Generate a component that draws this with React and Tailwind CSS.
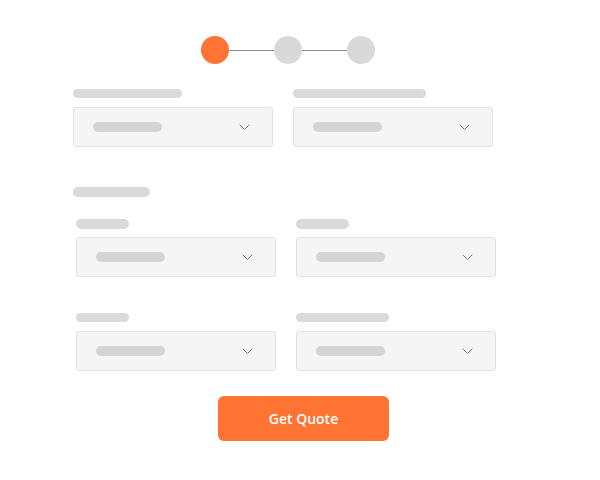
const Chevron = () => (
  <svg width="11" height="7" viewBox="0 0 11 7" fill="none" className="shrink-0">
    <path d="M1 1l4.5 4.5L10 1" stroke="#7a7a7a" strokeWidth="1" strokeLinecap="round" strokeLinejoin="round" />
  </svg>
);

const Select = () => (
  <div className="flex h-[40px] w-[200px] items-center justify-between rounded-[3px] border border-[#e2e2e2] bg-[#f5f5f5] pl-[19px] pr-[22px]">
    <div className="h-[10px] w-[69px] rounded-full bg-[#d4d4d4]" />
    <Chevron />
  </div>
);

const Field = ({ labelW, labelH = 'h-[10px]', gap = 'mt-[8px]' }) => (
  <div className="flex flex-col">
    <div className={`${labelH} rounded-full bg-[#dadada] ${labelW}`} />
    <div className={gap}>
      <Select />
    </div>
  </div>
);

export default function App() {
  return (
    <div className="h-[480px] w-[600px] bg-white" style={{ fontFamily: '"Open Sans", Lato, sans-serif' }}>
      <div className="flex items-center pl-[201px] pt-[36px]">
        <div className="size-[28px] rounded-full bg-[#ff7433]" />
        <div className="h-px w-[45px] bg-[#8a8a8a]" />
        <div className="size-[28px] rounded-full bg-[#d9d9d9]" />
        <div className="h-px w-[45px] bg-[#8a8a8a]" />
        <div className="size-[28px] rounded-full bg-[#d9d9d9]" />
      </div>

      <div className="mt-[25px] flex gap-[20px] pl-[73px]">
        <Field labelW="w-[109px]" labelH="h-[9px]" gap="mt-[9px]" />
        <Field labelW="w-[133px]" labelH="h-[9px]" gap="mt-[9px]" />
      </div>

      <div className="mt-[40px] pl-[73px]">
        <div className="h-[10px] w-[77px] rounded-full bg-[#dadada]" />
      </div>

      <div className="mt-[22px] flex gap-[20px] pl-[76px]">
        <Field labelW="w-[53px]" />
        <Field labelW="w-[53px]" />
      </div>

      <div className="mt-[36px] flex gap-[20px] pl-[76px]">
        <Field labelW="w-[53px]" labelH="h-[9px]" gap="mt-[9px]" />
        <Field labelW="w-[93px]" labelH="h-[9px]" gap="mt-[9px]" />
      </div>

      <div className="mt-[25px] pl-[218px]">
        <button className="flex h-[45px] w-[171px] items-center justify-center rounded-[6px] bg-[#ff7433] text-[14px] font-semibold text-white">
          Get Quote
        </button>
      </div>
    </div>
  );
}
